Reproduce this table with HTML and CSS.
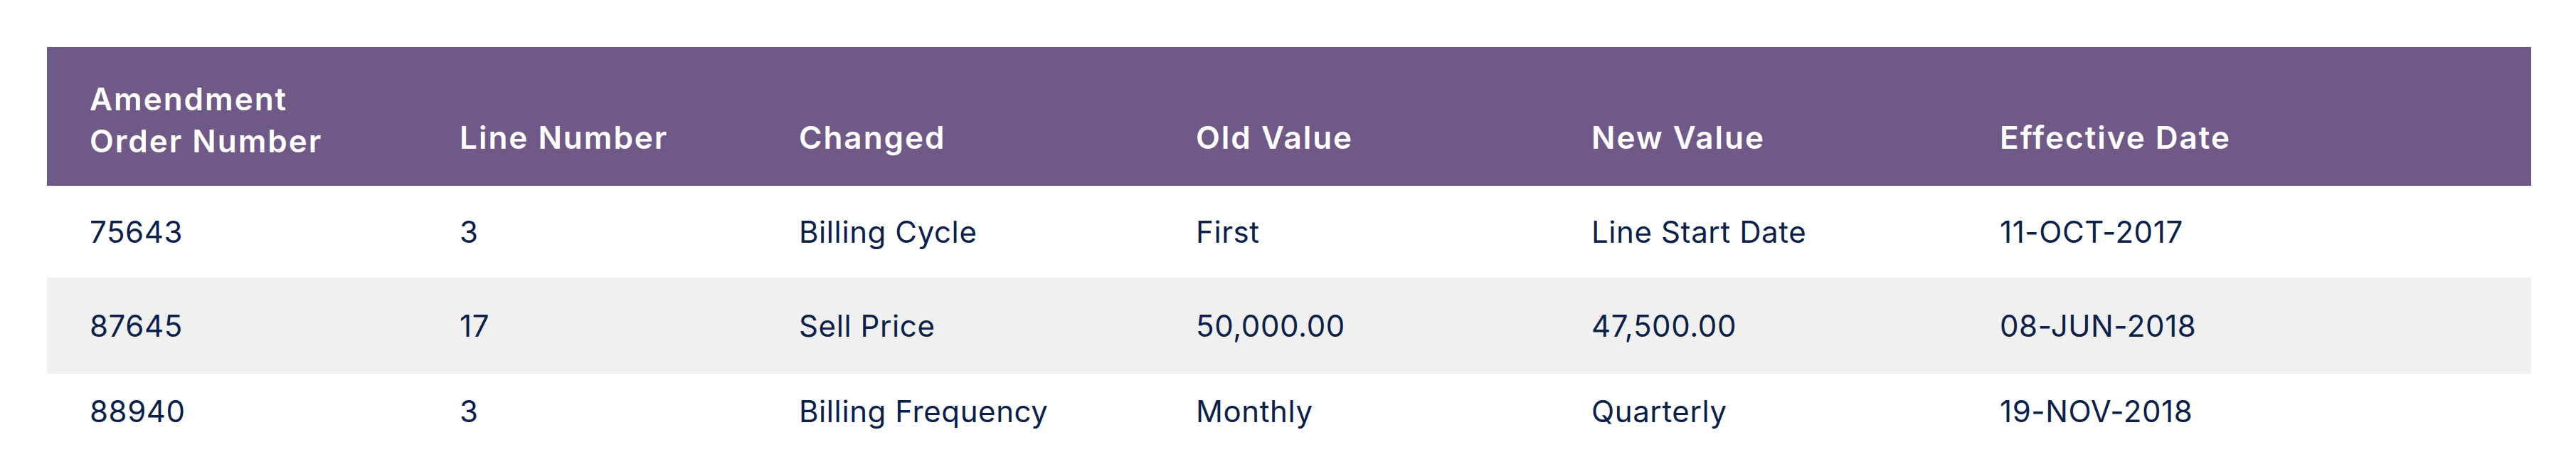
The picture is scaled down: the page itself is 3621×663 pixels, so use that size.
FILE: index.html
```html
<!DOCTYPE html>
<html lang="en">
<head>
<meta charset="utf-8">
<title>Amendments</title>
<link rel="stylesheet" href="styles.css">
</head>
<body>
<table class="amend-table">
  <colgroup>
    <col class="c1"><col class="c2"><col class="c3"><col class="c4"><col class="c5"><col class="c6">
  </colgroup>
  <thead>
    <tr>
      <th class="th-wrap">Amendment<br>Order Number</th>
      <th>Line Number</th>
      <th>Changed</th>
      <th>Old Value</th>
      <th>New Value</th>
      <th>Effective Date</th>
    </tr>
  </thead>
  <tbody>
    <tr class="row-a">
      <td>75643</td><td>3</td><td>Billing Cycle</td><td>First</td><td>Line Start Date</td><td>11-OCT-2017</td>
    </tr>
    <tr class="row-b">
      <td>87645</td><td>17</td><td>Sell Price</td><td>50,000.00</td><td>47,500.00</td><td>08-JUN-2018</td>
    </tr>
    <tr class="row-c">
      <td>88940</td><td>3</td><td>Billing Frequency</td><td>Monthly</td><td>Quarterly</td><td>19-NOV-2018</td>
    </tr>
  </tbody>
</table>
</body>
</html>
```
FILE: styles.css
```css
html, body {
  margin: 0;
  padding: 0;
  background: #ffffff;
}

body {
  font-family: "Inter", "Open Sans", sans-serif;
}

.amend-table {
  margin: 66px 0 0 66px;
  width: 3492px;
  table-layout: fixed;
  border-collapse: collapse;
  border-spacing: 0;
}

.c1 { width: 520px; }
.c2 { width: 477px; }
.c3 { width: 558px; }
.c4 { width: 556px; }
.c5 { width: 574px; }
.c6 { width: 807px; }

.amend-table thead tr {
  background: #6e5987;
}

.amend-table th {
  color: #ffffff;
  font-size: 44px;
  font-weight: 600;
  letter-spacing: 2px;
  line-height: 59px;
  text-align: left;
  vertical-align: bottom;
  padding: 44px 40px 38px 60px;
  white-space: nowrap;
}

.amend-table th.th-wrap {
  padding-bottom: 33px;
}

.amend-table td {
  color: #0b1f4b;
  font-size: 42px;
  font-weight: 400;
  letter-spacing: 0.6px;
  line-height: 60px;
  text-align: left;
  vertical-align: top;
  padding: 35px 40px 34px 60px;
  white-space: nowrap;
}

.row-b {
  background: #f0f0f0;
}

.row-b td {
  padding-top: 38px;
  padding-bottom: 37px;
}

.row-c td {
  padding-top: 23px;
  padding-bottom: 23px;
}
```
